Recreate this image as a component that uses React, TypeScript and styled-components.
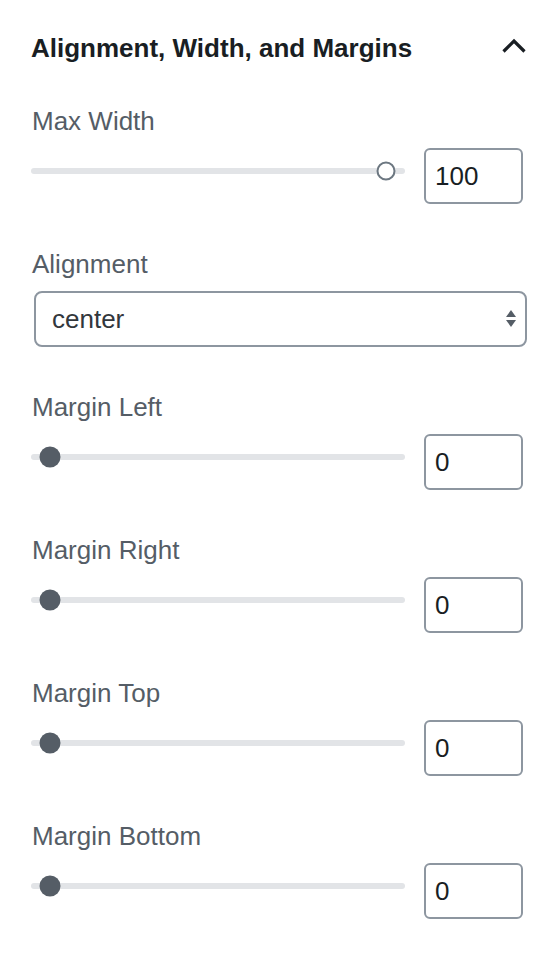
import React from "react";
import styled, { createGlobalStyle } from "styled-components";

const GlobalStyle = createGlobalStyle`
  html, body {
    margin: 0;
    padding: 0;
    background: #ffffff;
  }
  body {
    font-family: "Liberation Sans", Arial, sans-serif;
    -webkit-font-smoothing: antialiased;
  }
  * { box-sizing: border-box; }
`;

const Panel = styled.section`
  width: 542px;
  padding: 30px 17px 0 31px;
`;

const Header = styled.div`
  display: flex;
  align-items: center;
  justify-content: space-between;
  height: 36px;
  margin-bottom: 37px;
`;

const Title = styled.h2`
  margin: 0;
  font-size: 26px;
  line-height: 36px;
  font-weight: 700;
  color: #191e23;
`;

const Chevron = styled.svg`
  display: block;
  width: 24px;
  height: 16px;
  margin-top: -4px;
  margin-right: -1px;
`;

const Body = styled.div`
  padding-right: 2px;
`;

const Field = styled.div`
  margin-bottom: 42px;
`;

const Label = styled.div`
  font-size: 26px;
  line-height: 36px;
  color: #555d66;
  margin-bottom: 9px;
  padding-left: 1px;
`;

const Row = styled.div`
  display: flex;
  align-items: flex-start;
  gap: 19px;
`;

const Track = styled.div`
  position: relative;
  flex: 1;
  height: 6px;
  margin-top: 20px;
  border-radius: 3px;
  background: #e2e4e7;
`;

const Thumb = styled.span<{ $hollow?: boolean }>`
  position: absolute;
  top: 50%;
  width: ${(p) => (p.$hollow ? "19px" : "21px")};
  height: ${(p) => (p.$hollow ? "19px" : "21px")};
  border-radius: 50%;
  transform: translate(-50%, -50%);
  background: ${(p) => (p.$hollow ? "#ffffff" : "#555d66")};
  border: ${(p) => (p.$hollow ? "2.5px solid #6c7781" : "none")};
`;

const NumberBox = styled.div`
  width: 99px;
  height: 56px;
  border: 2px solid #8d96a0;
  border-radius: 6px;
  padding: 0 9px;
  display: flex;
  align-items: center;
  font-size: 26px;
  color: #191e23;
`;

const SelectBox = styled.div`
  display: flex;
  align-items: center;
  justify-content: space-between;
  height: 56px;
  margin-left: 3px;
  margin-right: -4px;
  border: 2px solid #8d96a0;
  border-radius: 8px;
  padding: 0 8px 0 16px;
  font-size: 26px;
  color: #32373c;
`;

const Arrows = styled.svg`
  display: block;
  width: 12px;
  height: 20px;
`;

function Slider({ label, value, hollow }: { label: string; value: number; hollow?: boolean }) {
  return (
    <Field>
      <Label>{label}</Label>
      <Row>
        <Track>
          <Thumb $hollow={hollow} style={{ left: `calc(19px + (100% - 38px) * ${value / 100})` }} />
        </Track>
        <NumberBox>{value}</NumberBox>
      </Row>
    </Field>
  );
}

export default function App() {
  return (
    <>
      <GlobalStyle />
      <Panel>
        <Header>
          <Title>Alignment, Width, and Margins</Title>
          <Chevron viewBox="0 0 24 16">
            <polyline points="1.5,13.5 12,3 22.5,13.5" fill="none" stroke="#191e23" strokeWidth="3.2" />
          </Chevron>
        </Header>
        <Body>
          <Slider label="Max Width" value={100} hollow />
          <Field>
            <Label>Alignment</Label>
            <SelectBox>
              <span>center</span>
              <Arrows viewBox="0 0 12 20">
                <polygon points="1,8 6,1 11,8" fill="#555d66" />
                <polygon points="1,11 11,11 6,18" fill="#555d66" />
              </Arrows>
            </SelectBox>
          </Field>
          <Slider label="Margin Left" value={0} />
          <Slider label="Margin Right" value={0} />
          <Slider label="Margin Top" value={0} />
          <Slider label="Margin Bottom" value={0} />
        </Body>
      </Panel>
    </>
  );
}
